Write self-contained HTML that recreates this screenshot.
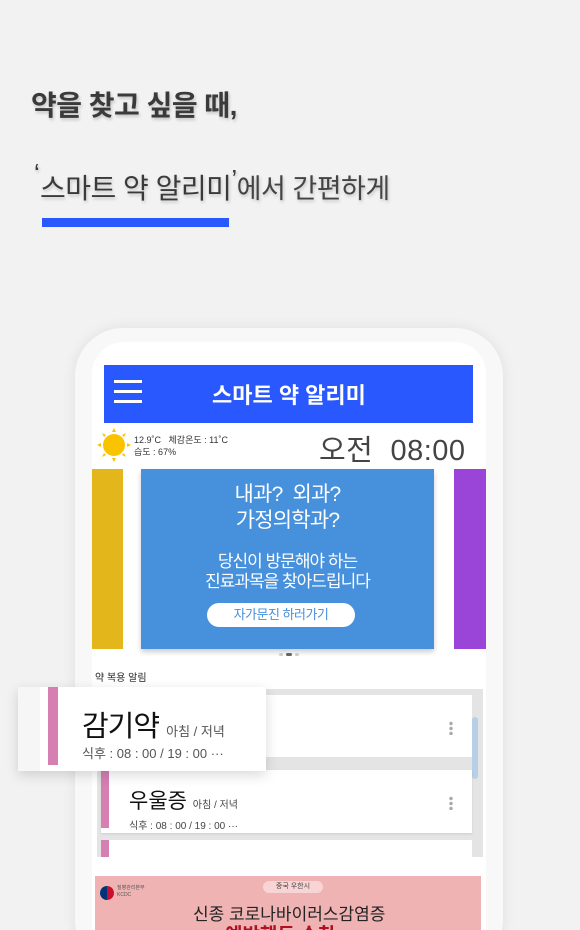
<!DOCTYPE html>
<html><head><meta charset="utf-8"><style>
*{margin:0;padding:0;box-sizing:border-box}
html,body{width:580px;height:930px;overflow:hidden}
body{background:#f2f2f2;position:relative;font-family:"Liberation Sans","Noto Sans CJK KR",sans-serif}
.a{position:absolute}
.sh{text-shadow:1px 2px 3px rgba(0,0,0,.2)}
</style></head><body>
<div class="a sh" style="left:31px;top:84px;font-size:28px;font-weight:bold;color:#3a3a3a;letter-spacing:-0.5px">약을 찾고 싶을 때,</div>
<div class="a sh" style="left:34px;top:158px;font-size:26px;color:#3a3a3a">‘</div>
<div class="a sh" style="left:40px;top:167px;font-size:28px;color:#3a3a3a;letter-spacing:-0.5px">스마트 약 알리미<span style="font-size:26px;position:relative;top:-10px">’</span><span style="font-size:27px;color:#444">에서 간편하게</span></div>
<div class="a" style="left:42px;top:218px;width:187px;height:9px;background:#2a58ff"></div>

<div class="a" style="left:75px;top:328px;width:428px;height:640px;border-radius:48px;background:#f8f8f8;box-shadow:0 0 14px rgba(0,0,0,.08)"></div>
<div class="a" style="left:92px;top:342px;width:394px;height:620px;border-radius:32px;background:#fff"></div>
<div class="a" style="left:104px;top:365px;width:369px;height:58px;background:#2a58ff"></div>
<div class="a" style="left:114px;top:380px;width:28px;height:3px;background:#fff"></div>
<div class="a" style="left:114px;top:390px;width:28px;height:3px;background:#fff"></div>
<div class="a" style="left:114px;top:400px;width:28px;height:3px;background:#fff"></div>
<div class="a" style="left:212px;top:378px;font-size:22px;font-weight:bold;color:#fff">스마트 약 알리미</div>

<svg class="a" style="left:97px;top:428px" width="34" height="34" viewBox="0 0 34 34"><circle cx="17" cy="17" r="11" fill="#fbc200"/><g fill="#fbc200"><polygon points="17,0 15,4 19,4"/><polygon points="17,34 15,30 19,30"/><polygon points="0,17 4,15 4,19"/><polygon points="34,17 30,15 30,19"/><polygon points="5,5 9,7 7,9"/><polygon points="29,29 25,27 27,25"/><polygon points="29,5 27,9 25,7"/><polygon points="5,29 7,25 9,27"/></g></svg>
<div class="a" style="left:134px;top:434px;font-size:9px;color:#333;line-height:12px">12.9˚C &nbsp;&nbsp;체감온도 : 11˚C<br>습도 : 67%</div>
<div class="a" style="left:319px;top:427px;font-size:29px;color:#444;letter-spacing:0.5px">오전&nbsp; 08:00</div>

<div class="a" style="left:92px;top:469px;width:31px;height:180px;background:#e3b61b"></div>
<div class="a" style="left:454px;top:469px;width:32px;height:180px;background:#9b44d8"></div>
<div class="a" style="left:141px;top:469px;width:293px;height:180px;background:#4690dc;box-shadow:0 3px 5px rgba(0,0,0,.2);color:#fff;text-align:center">
<div style="margin-top:13px;font-size:21px;line-height:26px;letter-spacing:-0.8px">내과?&nbsp; 외과?<br>가정의학과?</div>
<div style="margin-top:18px;font-size:17px;line-height:20px;letter-spacing:-1px">당신이 방문해야 하는<br>진료과목을 찾아드립니다</div>
<div style="margin:11px auto 0 66px;width:148px;height:24px;border-radius:12px;background:#fff;color:#4690dc;font-size:13px;line-height:24px;letter-spacing:-0.5px">자가문진 하러가기</div>
</div>
<div class="a" style="left:279px;top:653px;width:4px;height:3px;border-radius:2px;background:#ccc"></div>
<div class="a" style="left:286px;top:653px;width:6px;height:3px;border-radius:2px;background:#666"></div>
<div class="a" style="left:295px;top:653px;width:4px;height:3px;border-radius:2px;background:#ccc"></div>

<div class="a" style="left:95px;top:669px;font-size:10px;color:#222">약 복용 알림</div>
<div class="a" style="left:97px;top:689px;width:386px;height:168px;background:#e4e4e4"></div>
<div class="a" style="left:103px;top:695px;width:369px;height:62px;background:#fff"></div>
<div class="a" style="left:449px;top:721px;width:4px;height:14px;background:radial-gradient(circle,#aaa 1.5px,transparent 2px) 0 0/4px 5px"></div>
<div class="a" style="left:472px;top:717px;width:6px;height:62px;border-radius:3px;background:#b8cfe8"></div>
<div class="a" style="left:101px;top:770px;width:371px;height:63px;background:#fff;box-shadow:0 1px 2px rgba(0,0,0,.1)"></div>
<div class="a" style="left:101px;top:770px;width:8px;height:58px;background:#d57fb3"></div>
<div class="a" style="left:129px;top:785px;font-size:21px;color:#111">우울증 <span style="font-size:10px;color:#444">아침 / 저녁</span></div>
<div class="a" style="left:129px;top:817px;font-size:10px;color:#444">식후 : 08 : 00 / 19 : 00 ···</div>
<div class="a" style="left:449px;top:796px;width:4px;height:14px;background:radial-gradient(circle,#aaa 1.5px,transparent 2px) 0 0/4px 5px"></div>
<div class="a" style="left:101px;top:840px;width:371px;height:17px;background:#fff"></div>
<div class="a" style="left:101px;top:840px;width:8px;height:17px;background:#d57fb3"></div>

<div class="a" style="left:18px;top:687px;width:248px;height:84px;background:#fff;box-shadow:0 4px 12px rgba(0,0,0,.15)"></div>
<div class="a" style="left:18px;top:687px;width:22px;height:84px;background:#f6f6f6"></div>
<div class="a" style="left:48px;top:687px;width:10px;height:78px;background:#d57fb3"></div>
<div class="a" style="left:82px;top:703px;font-size:29px;color:#111;letter-spacing:-1px">감기약 <span style="font-size:13px;color:#555;letter-spacing:0">아침 / 저녁</span></div>
<div class="a" style="left:82px;top:743px;font-size:13px;color:#555">식후 : 08 : 00 / 19 : 00 ···</div>

<div class="a" style="left:95px;top:876px;width:386px;height:54px;background:#f0b3b3;overflow:hidden">
<div class="a" style="left:8px;top:55px;width:60px;height:40px;border-radius:30px;background:#f6c4c4"></div>
<div class="a" style="left:5px;top:10px;width:14px;height:14px;border-radius:7px;background:conic-gradient(#c8102e 0 50%,#003478 50% 100%)"></div>
<div class="a" style="left:22px;top:9px;font-size:5px;color:#555;line-height:7px">질병관리본부<br>KCDC</div>
<div class="a" style="left:168px;top:5px;width:60px;height:12px;border-radius:6px;background:#f8d4d4;font-size:7px;text-align:center;line-height:12px;color:#444">중국 우한시</div>
<div class="a" style="left:98px;top:24px;font-size:17px;color:#222">신종 코로나바이러스감염증</div>
<div class="a" style="left:130px;top:44px;font-size:19px;color:#b01020;font-weight:bold">예방행동 수칙</div>
</div>
</body></html>
